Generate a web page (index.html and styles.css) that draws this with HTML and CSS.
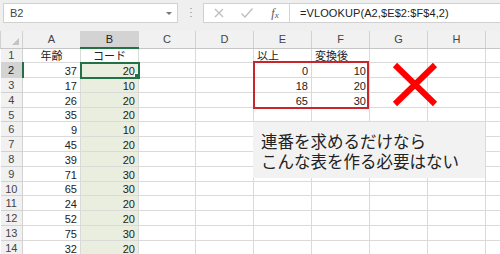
FILE: index.html
```html
<!DOCTYPE html>
<html lang="ja">
<head>
    <meta charset="UTF-8">
    <meta name="viewport" content="width=device-width, initial-scale=1.0">
    <title>VLOOKUP</title>
    <link rel="stylesheet" href="styles.css">
</head>
<body>
    <div class="app">
        <div class="formula-bar">
            <div class="name-box">
                <span class="cell-ref">B2</span>
                <span class="caret"></span>
            </div>
            <div class="grip"></div>
            <div class="formula-box">
                <span class="fb-icon">
                    <svg width="12" height="12" viewBox="0 0 12 12"><path d="M2 2 L10 10 M10 2 L2 10" stroke="#bdbdbd" stroke-width="1.3" fill="none"/></svg>
                </span>
                <span class="fb-icon">
                    <svg width="14" height="12" viewBox="0 0 14 12"><path d="M1.5 6.5 L5 10 L12.5 1.5" stroke="#bdbdbd" stroke-width="1.3" fill="none"/></svg>
                </span>
                <span class="fb-icon fx"><i>f</i><span class="fx-x">x</span></span>
                <span class="formula">=VLOOKUP(A2,$E$2:$F$4,2)</span>
            </div>
        </div>

        <div class="sheet">
            <table class="grid">
                <colgroup>
                    <col class="c-rh">
                    <col class="c-std">
                    <col class="c-std">
                    <col class="c-narrow">
                    <col class="c-std">
                    <col class="c-std">
                    <col class="c-std">
                    <col class="c-std">
                    <col class="c-std">
                    <col class="c-std">
                </colgroup>
                <tr class="head">
                    <th class="corner"></th>
                    <th>A</th><th class="sel">B</th><th>C</th><th>D</th><th>E</th><th>F</th><th>G</th><th>H</th><th></th>
                </tr>
                <tr>
                    <th class="rh">1</th>
                    <td class="center">年齢</td><td class="center">コード</td><td></td><td></td><td>以上</td><td>変換後</td><td></td><td></td><td></td>
                </tr>
                <tr>
                    <th class="rh sel">2</th>
                    <td class="num">37</td><td class="num col-b active">20<span class="handle"></span></td><td></td><td></td><td class="num">0</td><td class="num">10</td><td></td><td></td><td></td>
                </tr>
                <tr>
                    <th class="rh">3</th>
                    <td class="num">17</td><td class="num col-b">10</td><td></td><td></td><td class="num">18</td><td class="num">20</td><td></td><td></td><td></td>
                </tr>
                <tr>
                    <th class="rh">4</th>
                    <td class="num">26</td><td class="num col-b">20</td><td></td><td></td><td class="num">65</td><td class="num">30</td><td></td><td></td><td></td>
                </tr>
                <tr>
                    <th class="rh">5</th>
                    <td class="num">35</td><td class="num col-b">20</td><td></td><td></td><td></td><td></td><td></td><td></td><td></td>
                </tr>
                <tr>
                    <th class="rh">6</th>
                    <td class="num">9</td><td class="num col-b">10</td><td></td><td></td><td></td><td></td><td></td><td></td><td></td>
                </tr>
                <tr>
                    <th class="rh">7</th>
                    <td class="num">45</td><td class="num col-b">20</td><td></td><td></td><td></td><td></td><td></td><td></td><td></td>
                </tr>
                <tr>
                    <th class="rh">8</th>
                    <td class="num">39</td><td class="num col-b">20</td><td></td><td></td><td></td><td></td><td></td><td></td><td></td>
                </tr>
                <tr>
                    <th class="rh">9</th>
                    <td class="num">71</td><td class="num col-b">30</td><td></td><td></td><td></td><td></td><td></td><td></td><td></td>
                </tr>
                <tr>
                    <th class="rh">10</th>
                    <td class="num">65</td><td class="num col-b">30</td><td></td><td></td><td></td><td></td><td></td><td></td><td></td>
                </tr>
                <tr>
                    <th class="rh">11</th>
                    <td class="num">24</td><td class="num col-b">20</td><td></td><td></td><td></td><td></td><td></td><td></td><td></td>
                </tr>
                <tr>
                    <th class="rh">12</th>
                    <td class="num">52</td><td class="num col-b">20</td><td></td><td></td><td></td><td></td><td></td><td></td><td></td>
                </tr>
                <tr>
                    <th class="rh">13</th>
                    <td class="num">75</td><td class="num col-b">30</td><td></td><td></td><td></td><td></td><td></td><td></td><td></td>
                </tr>
                <tr>
                    <th class="rh">14</th>
                    <td class="num">32</td><td class="num col-b">20</td><td></td><td></td><td></td><td></td><td></td><td></td><td></td>
                </tr>
            </table>

            <!-- shapes drawn over the sheet -->
            <div class="range-box"></div>
            <svg class="cross" width="46" height="45" viewBox="0 0 46 45">
                <path d="M3 3 L43 42 M43 3 L3 42" stroke="#ff0000" stroke-width="6" fill="none"/>
            </svg>
            <div class="note">
                <div class="note-line">連番を求めるだけなら</div>
                <div class="note-line">こんな表を作る必要はない</div>
            </div>
        </div>
    </div>
</body>
</html>
```

FILE: styles.css
```css
html, body {
    margin: 0;
    padding: 0;
}
body {
    width: 500px;
    height: 254px;
    overflow: hidden;
    background: #fff;
    font-family: "Liberation Sans", "Noto Sans CJK JP", sans-serif;
    color: #222;
}
.app {
    width: 500px;
    height: 254px;
    overflow: hidden;
}

/* formula bar */
.formula-bar {
    height: 31px;
    box-sizing: border-box;
    padding: 3px 0 0 3px;
    display: flex;
    align-items: flex-start;
    background: #efefef;
}
.name-box {
    width: 175px;
    height: 20px;
    box-sizing: border-box;
    border: 1px solid #d0d0d0;
    background: #fff;
    display: flex;
    align-items: center;
    justify-content: space-between;
    padding: 0 5px 0 6px;
}
.cell-ref {
    font-size: 11px;
    color: #444;
}
.caret {
    width: 0;
    height: 0;
    border-left: 3px solid transparent;
    border-right: 3px solid transparent;
    border-top: 3px solid #777;
}
.grip {
    width: 25px;
    height: 20px;
    display: flex;
    justify-content: center;
    align-items: center;
}
.grip::before {
    content: "";
    width: 2px;
    height: 11px;
    background: repeating-linear-gradient(to bottom, #b5b5b5 0 1px, transparent 1px 4px);
}
.formula-box {
    flex: 1;
    height: 20px;
    box-sizing: border-box;
    border: 1px solid #d0d0d0;
    border-right: none;
    background: #fff;
    display: flex;
    align-items: center;
    padding-left: 1px;
}
.fb-icon {
    width: 28px;
    height: 18px;
    display: flex;
    align-items: center;
    justify-content: center;
}
.fx {
    font-family: "Liberation Serif", serif;
    font-size: 12px;
    color: #555;
    border-right: 1px solid #d4d4d4;
    margin-right: 10px;
}
.fx i {
    font-style: italic;
}
.fx-x {
    font-size: 9px;
    font-style: italic;
    margin-top: 3px;
}
.formula {
    font-size: 11px;
    letter-spacing: 0.1px;
    color: #222;
    white-space: nowrap;
}

/* sheet */
.sheet {
    position: relative;
}
.grid {
    border-collapse: collapse;
    table-layout: fixed;
    width: 543px;
}
.c-rh { width: 22px; }
.c-std { width: 58px; }
.c-narrow { width: 57px; }
.grid tr {
    height: 14.8px;
}
.grid tr.head {
    height: 17px;
}
.grid td,
.grid th {
    border: 1px solid #dadada;
    padding: 0 3px;
    font-size: 11px;
    line-height: 12px;
    font-weight: normal;
    vertical-align: bottom;
    white-space: nowrap;
    overflow: hidden;
}
.grid th {
    background: #f1f1f1;
    color: #444;
    text-align: center;
    border-color: #d2d2d2;
    vertical-align: middle;
}
.grid tr.head th {
    border-top: none;
    border-bottom-color: #c6c6c6;
}
.grid th.corner {
    position: relative;
}
.corner::after {
    content: "";
    position: absolute;
    right: 3px;
    bottom: 3px;
    border-left: 7px solid transparent;
    border-bottom: 7px solid #c4c4c4;
}
.grid th.rh {
    border-left: none;
    text-align: center;
    padding: 0;
}
.grid tr.head th.sel {
    background: #d3d3d3;
    border-bottom: 2px solid #217346;
    color: #222;
}
.grid th.rh.sel {
    background: #d3d3d3;
    border-right: 2px solid #217346;
    color: #222;
}
.num {
    text-align: right;
}
.center {
    text-align: center;
}
.col-b {
    background: #e9eedf;
}
.grid td.active {
    position: relative;
    outline: 2px solid #217346;
    outline-offset: -1px;
}
.handle {
    position: absolute;
    right: -3px;
    bottom: -3px;
    width: 5px;
    height: 5px;
    background: #217346;
    border: 1px solid #fff;
}

/* shapes */
.range-box {
    position: absolute;
    left: 253px;
    top: 30px;
    width: 112px;
    height: 44px;
    border: 2px solid #c9252c;
}
.cross {
    position: absolute;
    left: 392px;
    top: 31px;
}
.note {
    position: absolute;
    left: 253px;
    top: 91px;
    width: 232px;
    height: 56px;
    box-sizing: border-box;
    padding: 9px 0 0 8px;
    background: #f2f2f2;
    font-family: "Noto Sans CJK JP", sans-serif;
    font-size: 16.5px;
    color: #222;
    white-space: nowrap;
}
.note-line {
    height: 20px;
    line-height: 20px;
}
```
